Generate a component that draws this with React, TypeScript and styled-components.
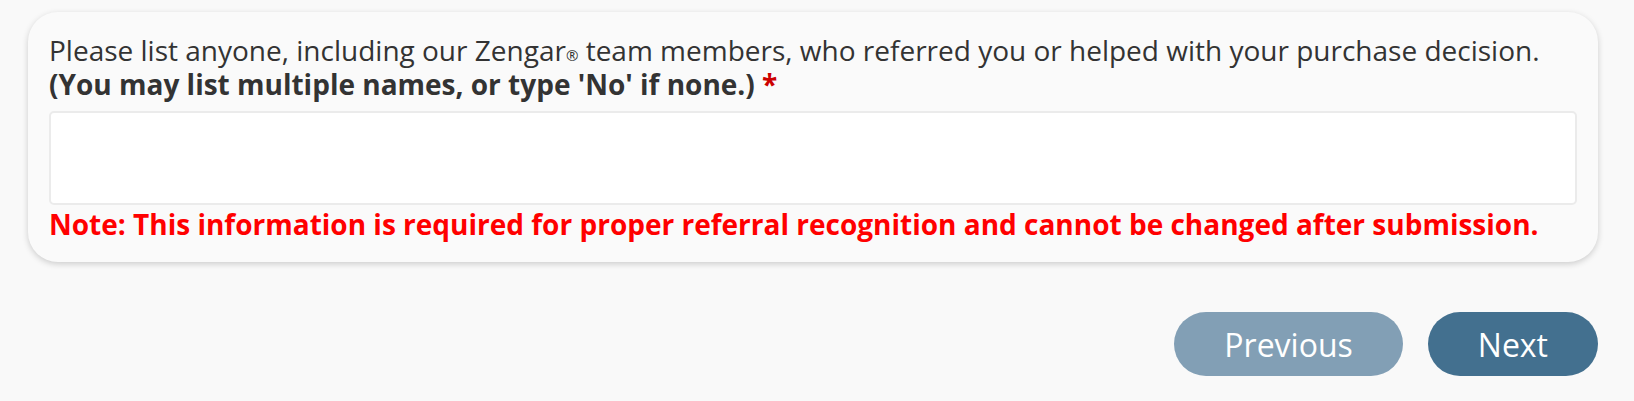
import styled, { createGlobalStyle } from 'styled-components'

const GlobalStyle = createGlobalStyle`
  html, body {
    margin: 0;
    padding: 0;
    background: #f9f9f9;
  }
  body {
    font-family: "Open Sans", "Noto Sans", sans-serif;
    color: #333333;
  }
`

const App: React.FC = () => {
  return (
    <StyledPage>
      <GlobalStyle />
      <StyledCard>
        <StyledQuestion>
          <StyledLine>
            Please list anyone, including our Zengar<StyledReg>®</StyledReg> team members, who referred you or helped with your purchase decision.
          </StyledLine>
          <StyledLine>
            <strong>(You may list multiple names, or type 'No' if none.)</strong> <StyledRequired>*</StyledRequired>
          </StyledLine>
        </StyledQuestion>
        <StyledTextArea />
        <StyledNote>
          Note: This information is required for proper referral recognition and cannot be changed after submission.
        </StyledNote>
      </StyledCard>
      <StyledActions>
        <StyledButton $muted={true}>Previous</StyledButton>
        <StyledButton>Next</StyledButton>
      </StyledActions>
    </StyledPage>
  )
}

export default App

const StyledPage = styled.div`
  padding: 12px 36px 0 28px;
`

const StyledCard = styled.div`
  background: #fafafa;
  border-radius: 30px;
  box-shadow: 0 2px 6px rgba(0, 0, 0, 0.18);
  box-sizing: border-box;
  display: flex;
  flex-direction: column;
  padding: 21px 21px 21px 21px;
`

const StyledQuestion = styled.div`
  font-size: 28px;

  strong {
    font-weight: 700;
  }
`

const StyledLine = styled.div`
  height: 34px;
  line-height: 34px;
  white-space: nowrap;
`

const StyledReg = styled.span`
  font-size: 15px;
  line-height: 0;
`

const StyledRequired = styled.span`
  color: #cc0000;
  font-weight: 700;
`

const StyledTextArea = styled.textarea`
  background: #ffffff;
  border: 2px solid #ebebeb;
  border-radius: 5px;
  box-sizing: border-box;
  display: block;
  height: 94px;
  margin-top: 10px;
  resize: none;
  width: 100%;
`

const StyledNote = styled.div`
  color: #ff0000;
  font-size: 28px;
  font-weight: 700;
  line-height: 34px;
  margin-top: 2px;
`

const StyledActions = styled.div`
  display: flex;
  gap: 25px;
  justify-content: flex-end;
  margin-top: 50px;
`

const StyledButton = styled.button<{ $muted?: boolean }>`
  background: ${({ $muted }) => ($muted ? '#829fb5' : '#43708f')};
  border: none;
  border-radius: 32px;
  color: #ffffff;
  font-family: "Open Sans", "Noto Sans", sans-serif;
  font-size: 32px;
  height: 64px;
  padding: 0 50px;
`
